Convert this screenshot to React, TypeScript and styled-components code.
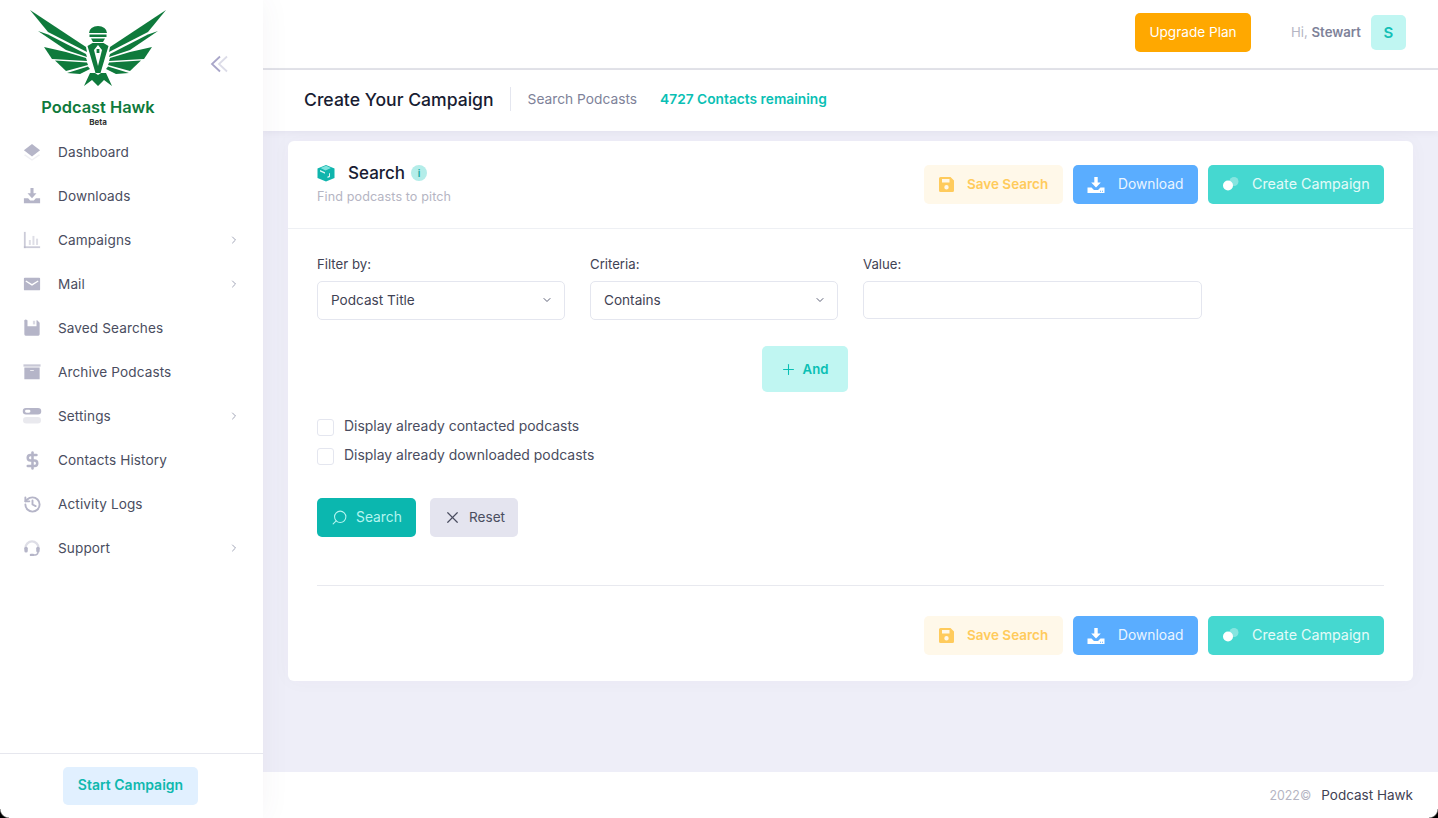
import React from "react";
import styled, { createGlobalStyle } from "styled-components";
import { ChevronDown, ChevronRight, DollarSign, History, Plus, Search, X } from "lucide-react";

const Global = createGlobalStyle`
  html, body { margin: 0; padding: 0; height: 100%; }
  body { font-family: Inter, "Liberation Sans", sans-serif; background: #eeeef8; color: #3f4254; }
  * { box-sizing: border-box; }
`;

const Page = styled.div`
  display: flex; height: 100vh; overflow: hidden; position: relative;
  &::before, &::after {
    content: ""; position: absolute; bottom: 0; width: 9px; height: 9px; z-index: 5; pointer-events: none;
  }
  &::before { left: 0; background: radial-gradient(circle at 100% 0, transparent 8px, #000 9.5px); }
  &::after { right: 0; background: radial-gradient(circle at 0 0, transparent 8px, #000 9.5px); }
`;
const Sidebar = styled.aside`
  width: 263px; flex: none; background: #fff; display: flex; flex-direction: column;
  box-shadow: 0 0 28px rgba(82, 63, 105, 0.06); z-index: 2;
`;
const Brand = styled.div`height: 130px; padding: 8px 0 0 28px; display: flex; align-items: flex-start;`;
const LogoBlock = styled.div`width: 140px; display: flex; flex-direction: column; align-items: center;`;
const LogoName = styled.div`font-size: 16.4px; line-height: 18px; font-weight: 600; color: #0f7a3c; margin-top: 10px; white-space: nowrap;`;
const LogoBeta = styled.div`font-size: 8px; line-height: 9px; font-weight: 700; color: #333; margin-top: 2px;`;
const Collapse = styled.div`margin: 47px 0 0 42px; line-height: 0;`;
const Nav = styled.nav`display: flex; flex-direction: column;`;
const NavItem = styled.div`
  height: 44px; padding: 0 23px 0 22px; display: flex; align-items: center;
  font-size: 13.6px; color: #4a4d60; letter-spacing: 0.1px;
`;
const NavIcon = styled.span`width: 20px; height: 20px; margin-right: 16px; display: flex; align-items: center; justify-content: center; color: #b5b5c8; flex: none;`;
const NavLabel = styled.span`flex: 1;`;
const SideFoot = styled.div`margin-top: auto; height: 65px; border-top: 1px solid #e6e7ee; padding-right: 2px; display: flex; align-items: center; justify-content: center;`;
const StartButton = styled.div`
  width: 135px; height: 38px; margin-bottom: 1px; border-radius: 5px; background: #e1f0ff; color: #0fb8ae;
  font-size: 14px; font-weight: 600; padding-bottom: 2px; display: flex; align-items: center; justify-content: center;
`;

const Main = styled.main`flex: 1; min-width: 0; display: flex; flex-direction: column;`;
const TopBar = styled.header`
  height: 70px; flex: none; background: #fff; border-bottom: 2px solid #e2e3e9;
  display: flex; align-items: flex-start; justify-content: flex-end; padding: 13px 32px 0 0;
`;
const Upgrade = styled.div`
  width: 116px; height: 39px; border-radius: 5px; background: #ffa800; color: #fff; font-size: 13.6px;
  padding-bottom: 1px; display: flex; align-items: center; justify-content: center; margin-right: 40px;
`;
const Greeting = styled.div`font-size: 13.2px; color: #b5b5c3; height: 38px; display: flex; align-items: center; margin-right: 10px; white-space: pre;`;
const GreetingName = styled.b`font-weight: 600; color: #7e8299;`;
const Avatar = styled.div`
  width: 35px; height: 35px; margin-top: 2px; border-radius: 5px; background: #c0f6f2; color: #12c0b6;
  font-size: 15px; font-weight: 600; display: flex; align-items: center; justify-content: center;
`;
const SubBar = styled.div`
  height: 61px; flex: none; background: #fff; display: flex; align-items: center; padding: 0 0 3px 41px;
  box-shadow: 0 2px 6px rgba(82, 63, 105, 0.06);
`;
const PageTitle = styled.h1`margin: 0; font-size: 17.6px; font-weight: 500; color: #181c32;`;
const SubDivider = styled.span`width: 1px; height: 24px; background: #e4e6ef; margin: 0 16px;`;
const SubText = styled.span`font-size: 13.75px; color: #7e8299; margin-left: 1px;`;
const Remaining = styled.span`font-size: 13.75px; font-weight: 600; color: #0abfb4; margin-left: 23px;`;

const Content = styled.div`flex: 1; padding: 10px 25px 0;`;
const Card = styled.section`background: #fff; border-radius: 6px; height: 540px; box-shadow: 0 0 20px rgba(82, 63, 105, 0.03); display: flex; flex-direction: column;`;
const CardHead = styled.div`
  height: 88px; flex: none; border-bottom: 1px solid #eef0f4; padding: 0 29px;
  display: flex; align-items: center; justify-content: space-between;
`;
const HeadLeft = styled.div`display: flex; flex-direction: column; gap: 6px; padding-bottom: 2px;`;
const HeadTitle = styled.div`display: flex; align-items: center; font-size: 17px; font-weight: 500; color: #181c32;`;
const TitleIcon = styled.span`width: 18px; height: 18px; margin-right: 13px; line-height: 0;`;
const Info = styled.span`
  width: 16px; height: 16px; border-radius: 50%; margin-left: 6px; background: #b4ede9; color: #12a89f;
  font-size: 10px; font-weight: 600; display: flex; align-items: center; justify-content: center;
`;
const HeadSub = styled.div`font-size: 12.6px; color: #b5b5c3; letter-spacing: 0.1px;`;
const Actions = styled.div`display: flex; gap: 10px;`;
const Action = styled.div<{ $bg: string; $fg: string; $w: number; $size: number; $lift: number }>`
  width: ${(p) => p.$w}px; height: 39px; border-radius: 5px; background: ${(p) => p.$bg}; color: ${(p) => p.$fg};
  font-size: ${(p) => p.$size}px; font-weight: 400; display: flex; align-items: center; padding-left: 14px; white-space: nowrap;
  padding-bottom: ${(p) => p.$lift}px;
`;
const SaveAction = styled(Action)`font-weight: 600;`;
const ActionIcon = styled.span<{ $gap: number }>`width: 17px; height: 17px; margin-right: ${(p) => p.$gap}px; line-height: 0; flex: none;`;

const CardBody = styled.div`flex: 1; padding: 27px 29px 0; display: flex; flex-direction: column;`;
const FilterRow = styled.div`display: flex; gap: 25px; align-items: flex-start;`;
const Field = styled.div<{ $w: number }>`width: ${(p) => p.$w}px; display: flex; flex-direction: column;`;
const FieldLabel = styled.label`font-size: 13.2px; line-height: 16px; color: #3f4254; margin-bottom: 9px;`;
const SelectBox = styled.div`
  height: 39px; border: 1px solid #e4e6ef; border-radius: 5px; padding: 0 11px 2px 13px; font-size: 13.6px; color: #3f4254;
  display: flex; align-items: center; justify-content: space-between;
`;
const TextBox = styled.input`height: 38px; width: 100%; border: 1px solid #e4e6ef; border-radius: 5px; background: #fff; outline: none;`;
const AndRow = styled.div`display: flex; justify-content: center; margin-top: 26px; padding-right: 91px;`;
const AndButton = styled.div`
  width: 86px; height: 46px; border-radius: 5px; background: #c0f6f2; color: #0abfb4; font-size: 13.2px; font-weight: 600;
  padding-right: 2px; display: flex; align-items: center; justify-content: center; gap: 6px;
`;
const Checks = styled.div`display: flex; flex-direction: column; gap: 12px; margin-top: 27px;`;
const CheckRow = styled.div`display: flex; align-items: center; font-size: 13.95px; line-height: 14px; color: #4a4d60; height: 17px;`;
const CheckBox = styled.span`width: 17px; height: 17px; border: 1px solid #e4e6ef; border-radius: 3px; margin-right: 10px; background: #fff;`;
const CheckText = styled.span`margin-top: -3px;`;
const FormButtons = styled.div`display: flex; gap: 14px; margin-top: 33px;`;
const SearchButton = styled.div`
  width: 99px; height: 39px; border-radius: 5px; background: #0bb7af; color: #b4f5f0; font-size: 13.8px;
  padding-bottom: 1px; display: flex; align-items: center; justify-content: center; gap: 8px;
`;
const ResetButton = styled.div`
  width: 88px; height: 39px; border-radius: 5px; background: #e4e4ef; color: #4a4d60; font-size: 13.6px;
  padding-bottom: 1px; display: flex; align-items: center; justify-content: center; gap: 7px;
`;
const Rule = styled.hr`border: 0; border-top: 1px solid #e8e9ef; margin: 48px 0 30px; width: 100%;`;
const BottomActions = styled(Actions)`justify-content: flex-end;`;
const Footer = styled.footer`
  height: 46px; flex: none; background: #fff; display: flex; align-items: center; justify-content: flex-end;
  padding: 0 25px 0 0; font-size: 13.5px; color: #3f4254; gap: 10px;
`;
const FooterYear = styled.span`color: #b5b5c3; font-size: 12.4px;`;
const MirrorSearch = styled(Search)`transform: scaleX(-1);`;

const Logo = () => (
  <svg width="140" height="80" viewBox="28 8 140 80" aria-hidden="true">
    <g fill="#0f7a3c">
      {[0, 1].map((m) => (
        <g key={m} transform={m ? "translate(196 0) scale(-1 1)" : undefined}>
          <polygon points="30,10 86,47 87,52 48,32" />
          <polygon points="38,31 48,34.500 86,54 87,57 66,50" />
          <polygon points="44,47 66,52 86,58 87,61 52,59" />
          <polygon points="55,60.500 87,62.500 88,65 66,71" />
          <polygon points="67,73 88,66.500 90,69 80,74" />
        </g>
      ))}
      <path d="M89 33a9 7 0 0 1 18 0z" />
      <rect x="89.500" y="34.500" width="17" height="2.500" />
      <polygon points="91,38.500 105,38.500 103,42 93,42" />
      <path fillRule="evenodd" d="M87.500 46l5-3h11l5 3-8 27h-5zM94 50l4 16 4-16-4-5z" />
      <polygon points="96.600,49 99.400,49 99.400,53 96.600,53" />
      <polygon points="84,86 90,73 95,73 98,75 101,73 106,73 112,86 104,80 98,86 92,80" />
    </g>
  </svg>
);

const Layers = () => (
  <svg width="18" height="18" viewBox="0 0 20 20" fill="currentColor">
    <path d="M10 1 19 8l-9 7L1 8z" />
    <path opacity=".2" d="M2.400 12.500 10 18l7.600-5.500 1.400 1.200-9 6-9-6z" />
  </svg>
);
const Tray = () => (
  <svg width="18" height="18" viewBox="0 0 20 20" fill="currentColor">
    <path d="M8.300 1h3.400v6h3.300L10 12.400 5 7h3.300z" />
    <path d="M1 12.500h4.700L8 15h4l2.300-2.500H19V18H1z" />
  </svg>
);
const Chart = () => (
  <svg width="18" height="18" viewBox="0 0 20 20" fill="currentColor">
    <rect x="1" y="1" width="2" height="18" opacity=".7" />
    <rect x="1" y="17" width="18" height="2" opacity=".7" />
    <rect x="6.500" y="10" width="2.200" height="5.500" opacity=".45" />
    <rect x="10.500" y="5.500" width="2.200" height="10" opacity=".45" />
    <rect x="14.500" y="8.500" width="2.200" height="7" opacity=".45" />
  </svg>
);
const Mail = () => (
  <svg width="18" height="18" viewBox="0 0 20 20" fill="currentColor">
    <path d="M2 3h16a1 1 0 0 1 1 1V16a1 1 0 0 1-1 1H2a1 1 0 0 1-1-1V4a1 1 0 0 1 1-1zM3.500 6l-.8 1.200L10 12l7.300-4.800-.8-1.200L10 10z" fillRule="evenodd" />
  </svg>
);
const Floppy = () => (
  <svg width="18" height="18" viewBox="0 0 20 20" fill="currentColor">
    <path d="M4.500 1.500H5V8h10V1.500h.8L18.500 4.200V17a1.500 1.500 0 0 1-1.500 1.500H3A1.500 1.500 0 0 1 1.500 17V3a1.500 1.500 0 0 1 3-1.500z" />
    <rect x="11" y="2" width="2.500" height="4" opacity=".5" />
  </svg>
);
const Archive = () => (
  <svg width="18" height="18" viewBox="0 0 20 20" fill="currentColor">
    <rect x="0.500" y="1.500" width="19" height="2.500" opacity=".75" />
    <path fillRule="evenodd" d="M1.500 5h17v13h-17zM8 8v1h4V8z" />
  </svg>
);
const Toggles = () => (
  <svg width="20" height="20" viewBox="0 0 20 20" fill="currentColor">
    <path fillRule="evenodd" d="M4 2h12a3.200 3.200 0 0 1 0 6.500H4A3.200 3.200 0 0 1 4 2zM4.500 3.800a1.400 1.400 0 0 0 0 2.900h2.500a1.400 1.400 0 0 0 0-2.900z" />
    <rect x="1" y="11" width="18" height="6.500" rx="3.250" opacity=".3" />
  </svg>
);
const Headset = () => (
  <svg width="18" height="18" viewBox="0 0 20 20" fill="currentColor">
    <path opacity=".45" fillRule="evenodd" d="M10 1.500a8.500 8.500 0 0 1 8.500 8.500v2H16v-2a6 6 0 0 0-12 0v2H1.500v-2A8.500 8.500 0 0 1 10 1.500z" />
    <rect x="1.500" y="8.500" width="3.800" height="6.500" rx="1.800" />
    <rect x="14.700" y="8.500" width="3.800" height="6.500" rx="1.800" />
    <path d="M16 14.500h1.400V15a4 4 0 0 1-4 3.500H11v-1.600h2.400a2.500 2.500 0 0 0 2.600-2.400z" />
    <rect x="7.500" y="16.300" width="5" height="2.700" rx="1.300" />
  </svg>
);
const SaveIcon = () => (
  <svg width="17" height="17" viewBox="0 0 17 17" fill="#ffcb5c">
    <path fillRule="evenodd" d="M2.500 1h10L16 4.500v10a1.500 1.500 0 0 1-1.500 1.500h-12A1.500 1.500 0 0 1 1 14.500v-12A1.500 1.500 0 0 1 2.500 1zM4 3v3.500h7.500V3zM8.500 9a2.200 2.200 0 1 0 0 4.400 2.200 2.200 0 0 0 0-4.400z" />
  </svg>
);
const DownloadIcon = () => (
  <svg width="18" height="18" viewBox="0 0 18 18" fill="#fff">
    <path d="M7.300 1h3.400v5.500h3.100L9 11.500 4.200 6.500h3.100z" />
    <path fillRule="evenodd" d="M.5 11.500h4L7 14h4l2.500-2.500h4V17H.5zM13 14.700v1h1v-1zM15 14.700v1h1v-1z" />
  </svg>
);
const Dots = () => (
  <svg width="17" height="17" viewBox="0 0 17 17" fill="#fff">
    <circle cx="12" cy="6.500" r="4.500" opacity=".35" />
    <circle cx="6" cy="10.500" r="5" />
  </svg>
);
const BoxIcon = () => (
  <svg width="18" height="18" viewBox="0 0 18 18">
    <path fill="#0fb5ad" d="M0.500 4.500 9 1l8.500 3.500v9.500L9 17.500 .5 14z" />
    <path fill="#7fe3dd" d="M3.500 4 9 1.800l5 2.200-5.500 2.400z" />
    <path fill="#fff" opacity=".85" d="M3 6l5 2.300v1.500L3 7.500zM12 9.500l1-.5v4l-2.500 1v-1.500l1.500-.5z" />
  </svg>
);

const menu: { label: string; icon: React.ReactNode; arrow?: boolean }[] = [
  { label: "Dashboard", icon: <Layers /> },
  { label: "Downloads", icon: <Tray /> },
  { label: "Campaigns", icon: <Chart />, arrow: true },
  { label: "Mail", icon: <Mail />, arrow: true },
  { label: "Saved Searches", icon: <Floppy /> },
  { label: "Archive Podcasts", icon: <Archive /> },
  { label: "Settings", icon: <Toggles />, arrow: true },
  { label: "Contacts History", icon: <DollarSign size={19} strokeWidth={3.2} /> },
  { label: "Activity Logs", icon: <History size={19} strokeWidth={2.4} /> },
  { label: "Support", icon: <Headset />, arrow: true },
];

const ActionRow = ({ as }: { as?: typeof Actions }) => {
  const Row = as ?? Actions;
  return (
    <Row>
      <SaveAction $bg="#fff8e9" $fg="#ffcb5c" $w={139} $size={13.5} $lift={1}>
        <ActionIcon $gap={12}><SaveIcon /></ActionIcon>Save Search
      </SaveAction>
      <Action $bg="#5aadff" $fg="#eaf5ff" $w={125} $size={13.8} $lift={1}>
        <ActionIcon $gap={14}><DownloadIcon /></ActionIcon>Download
      </Action>
      <Action $bg="#45d8d0" $fg="#e4fbf9" $w={176} $size={14.3} $lift={2}>
        <ActionIcon $gap={13}><Dots /></ActionIcon>Create Campaign
      </Action>
    </Row>
  );
};

export default function App() {
  return (
    <Page>
      <Global />
      <Sidebar>
        <Brand>
          <LogoBlock>
            <Logo />
            <LogoName>Podcast Hawk</LogoName>
            <LogoBeta>Beta</LogoBeta>
          </LogoBlock>
          <Collapse>
            <svg width="19" height="18" viewBox="0 0 19 18" fill="none" strokeWidth="1.800">
              <path d="M10 1.500 2 9l8 7.500" stroke="#a9a6c9" />
              <path d="M17 1.500 9 9l8 7.500" stroke="#dcdce8" />
            </svg>
          </Collapse>
        </Brand>
        <Nav>
          {menu.map((m) => (
            <NavItem key={m.label}>
              <NavIcon>{m.icon}</NavIcon>
              <NavLabel>{m.label}</NavLabel>
              {m.arrow && <ChevronRight size={12} color="#a1a5b7" />}
            </NavItem>
          ))}
        </Nav>
        <SideFoot>
          <StartButton>Start Campaign</StartButton>
        </SideFoot>
      </Sidebar>
      <Main>
        <TopBar>
          <Upgrade>Upgrade Plan</Upgrade>
          <Greeting>Hi, <GreetingName>Stewart</GreetingName></Greeting>
          <Avatar>S</Avatar>
        </TopBar>
        <SubBar>
          <PageTitle>Create Your Campaign</PageTitle>
          <SubDivider />
          <SubText>Search Podcasts</SubText>
          <Remaining>4727 Contacts remaining</Remaining>
        </SubBar>
        <Content>
          <Card>
            <CardHead>
              <HeadLeft>
                <HeadTitle>
                  <TitleIcon><BoxIcon /></TitleIcon>Search<Info>i</Info>
                </HeadTitle>
                <HeadSub>Find podcasts to pitch</HeadSub>
              </HeadLeft>
              <ActionRow />
            </CardHead>
            <CardBody>
              <FilterRow>
                <Field $w={248}>
                  <FieldLabel>Filter by:</FieldLabel>
                  <SelectBox>Podcast Title<ChevronDown size={12} color="#5e6278" /></SelectBox>
                </Field>
                <Field $w={248}>
                  <FieldLabel>Criteria:</FieldLabel>
                  <SelectBox>Contains<ChevronDown size={12} color="#5e6278" /></SelectBox>
                </Field>
                <Field $w={339}>
                  <FieldLabel>Value:</FieldLabel>
                  <TextBox />
                </Field>
              </FilterRow>
              <AndRow>
                <AndButton><Plus size={17} strokeWidth={1.500} />And</AndButton>
              </AndRow>
              <Checks>
                <CheckRow><CheckBox /><CheckText>Display already contacted podcasts</CheckText></CheckRow>
                <CheckRow><CheckBox /><CheckText>Display already downloaded podcasts</CheckText></CheckRow>
              </Checks>
              <FormButtons>
                <SearchButton><MirrorSearch size={17} strokeWidth={1.500} />Search</SearchButton>
                <ResetButton><X size={19} strokeWidth={1.500} />Reset</ResetButton>
              </FormButtons>
              <Rule />
              <ActionRow as={BottomActions} />
            </CardBody>
          </Card>
        </Content>
        <Footer>
          <FooterYear>2022©</FooterYear>
          Podcast Hawk
        </Footer>
      </Main>
    </Page>
  );
}
